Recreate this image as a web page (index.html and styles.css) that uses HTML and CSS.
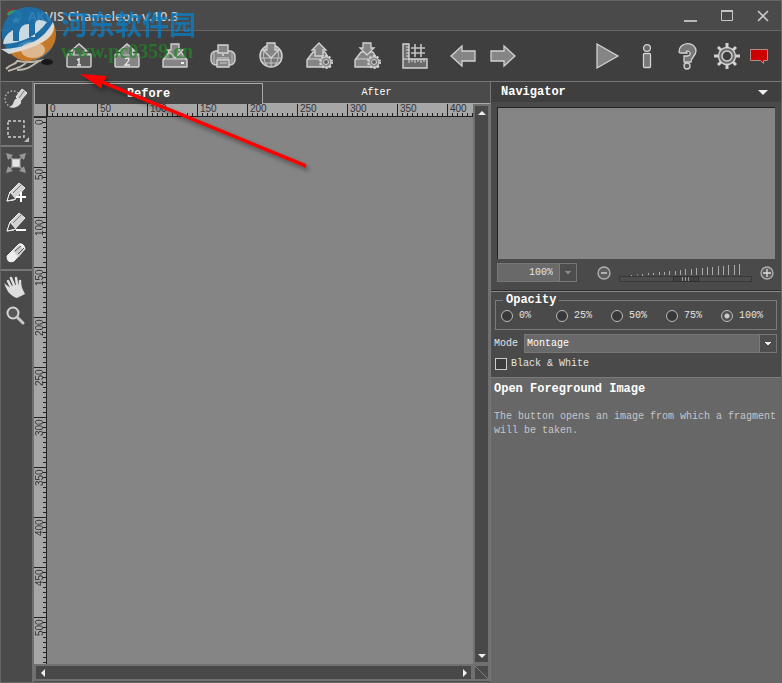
FILE: index.html
```html
<!DOCTYPE html>
<html lang="en">
<head>
<meta charset="utf-8">
<title>AKVIS Chameleon v.10.3</title>
<link rel="stylesheet" href="styles.css">
</head>
<body>
<div class="window">
  <header class="titlebar">
    <svg class="app-icon" width="18" height="18" viewBox="0 0 18 18"><path d="M1 1l4 3 3-3 2 4-5 3zM12 2l4-1-1 4z" fill="#a8283a"/><path d="M3 8c2-4 9-5 12 0 2 4-3 6-5 4" fill="none" stroke="#359a64" stroke-width="3"/><path d="M11 9l1 3 3 0-2 2 1 3-3-2-3 2 1-3-2-2h3z" fill="#d8d3a0"/></svg>
    <h1 class="title">AKVIS Chameleon v.10.3</h1>
    <div class="window-buttons">
      <button aria-label="Minimize"><svg width="14" height="14" viewBox="0 0 14 14"><path d="M0 12h13" stroke="#b8b8b8" stroke-width="2"/></svg></button>
      <button aria-label="Maximize"><svg width="14" height="14" viewBox="0 0 14 14"><path d="M1.500 2.500h11v9h-11z" fill="none" stroke="#c4c4c4"/><path d="M1 2h12" stroke="#c4c4c4" stroke-width="2"/></svg></button>
      <button aria-label="Close"><svg width="14" height="14" viewBox="0 0 14 14"><path d="M2 2l10 10M12 2L2 12" stroke="#c8c8c8" stroke-width="1.600"/></svg></button>
    </div>
  </header>

  <div class="toolbar">
    <svg class="brand" width="48" height="32" viewBox="0 0 48 32"><ellipse cx="26" cy="9" rx="14" ry="9" fill="#d8d2ca"/><path d="M1 29c5-6 9-3 12-9M3 31c9-3 16-4 20-11M12 30c9 0 12-2 22-9M13 21c10 2 16 1 26-1" fill="none" stroke="#bcb5aa" stroke-width="2"/><ellipse cx="42" cy="22" rx="6" ry="3" fill="#171717"/></svg>
    <button class="tool" aria-label="Open foreground image"><svg width="28" height="28" viewBox="0 0 28 28"><path d="M3 12h6V9H6l8-7 8 7h-3v3h6q1 0 1 1v11q0 1-1 1H3q-1 0-1-1V13q0-1 1-1z" fill="#5d5d5d" stroke="#d2d2d2" stroke-width="1.400"/><path d="M3 13h22" stroke="#d2d2d2"/><path d="M12 18l2-1v6M12 23h4" fill="none" stroke="#e5e5e5" stroke-width="1.400"/></svg></button>
    <button class="tool" aria-label="Open background image"><svg width="28" height="28" viewBox="0 0 28 28"><path d="M3 12h6V9H6l8-7 8 7h-3v3h6q1 0 1 1v11q0 1-1 1H3q-1 0-1-1V13q0-1 1-1z" fill="#858585" stroke="#d2d2d2" stroke-width="1.400"/><path d="M3 13h22" stroke="#c2c2c2"/><path d="M12 17q2-2 4 0 0 2-4 6h5" fill="none" stroke="#e5e5e5" stroke-width="1.300"/></svg></button>
    <button class="tool" aria-label="Save image"><svg width="28" height="28" viewBox="0 0 28 28"><path d="M2 18l6-8h12l6 8v7H2z" fill="#858585" stroke="#d2d2d2" stroke-width="1.400" stroke-linejoin="round"/><path d="M2 17h24" stroke="#d2d2d2"/><path d="M10 2h8v6h4l-8 8-8-8h4z" fill="#858585" stroke="#d2d2d2" stroke-width="1.300"/><path d="M20 21h3" stroke="#eee" stroke-width="2"/></svg></button>
    <button class="tool" aria-label="Print image"><svg width="28" height="28" viewBox="0 0 28 28"><rect x="2" y="9" width="24" height="14" rx="5" fill="#858585" stroke="#d2d2d2" stroke-width="1.400"/><path d="M5 10v12M23 10v12" stroke="#bcbcbc"/><path d="M9 3h10v8H9zM8 18h12v7H8z" fill="#858585" stroke="#d2d2d2" stroke-width="1.400"/><path d="M8 16h12M11 21h7" stroke="#cecece"/><circle cx="14" cy="13" r="1" fill="#ddd"/></svg></button>
    <button class="tool" aria-label="Publish image"><svg width="28" height="28" viewBox="0 0 28 28"><circle cx="14" cy="14" r="11" fill="#777" stroke="#d2d2d2" stroke-width="1.500"/><path d="M14 3v22M3 16h22M6 21h16M9 5q-6 9 2 20M19 5q6 9-2 20" fill="none" stroke="#c5c5c5"/><path d="M10 1h8v7h4l-8 8-8-8h4z" fill="#858585" stroke="#d2d2d2" stroke-width="1.300"/></svg></button>
    <button class="tool" aria-label="Load presets"><svg width="28" height="28" viewBox="0 0 28 28"><path d="M2 18l6-8h12l5 8v7H2z" fill="#858585" stroke="#d2d2d2" stroke-width="1.400" stroke-linejoin="round"/><path d="M2 17h18" stroke="#d2d2d2"/><path d="M14 1l7 7h-3v6h-8V8H7z" fill="#858585" stroke="#d2d2d2" stroke-width="1.300"/><circle cx="21" cy="20" r="6" fill="none" stroke="#d2d2d2" stroke-width="2" stroke-dasharray="2 1.800"/><circle cx="21" cy="20" r="5" fill="#858585" stroke="#d2d2d2"/><circle cx="21" cy="20" r="2.500" fill="#606060" stroke="#d2d2d2"/></svg></button>
    <button class="tool" aria-label="Save presets"><svg width="28" height="28" viewBox="0 0 28 28"><path d="M2 18l6-8h12l5 8v7H2z" fill="#858585" stroke="#d2d2d2" stroke-width="1.400" stroke-linejoin="round"/><path d="M2 17h18" stroke="#d2d2d2"/><path d="M10 1h8v5h3l-7 7-7-7h3z" fill="#858585" stroke="#d2d2d2" stroke-width="1.300"/><circle cx="21" cy="20" r="6" fill="none" stroke="#d2d2d2" stroke-width="2" stroke-dasharray="2 1.800"/><circle cx="21" cy="20" r="5" fill="#858585" stroke="#d2d2d2"/><circle cx="21" cy="20" r="2.500" fill="#606060" stroke="#d2d2d2"/></svg></button>
    <button class="tool" aria-label="Rulers and grid"><svg width="28" height="28" viewBox="0 0 28 28"><path d="M2 2h6v15h18v9H2z" fill="#6b6b6b" stroke="#d2d2d2" stroke-width="1.400"/><path d="M2 17h6M5 5h3M5 8h3M5 11h3M5 14h3M8 17v4M11 17v3M14 17v4M17 17v3M20 17v4M23 17v3" stroke="#ddd"/><path d="M14 2v13M20 2v13M10 6h14M10 11h14" stroke="#c4c4c4" stroke-width="1.600"/></svg></button>
    <button class="tool nav first" aria-label="Undo"><svg width="28" height="28" viewBox="0 0 28 28"><path d="M2 14L13 4v5h13v10H13v5z" fill="#858585" stroke="#d2d2d2" stroke-width="1.300"/></svg></button>
    <button class="tool nav" aria-label="Redo"><svg width="28" height="28" viewBox="0 0 28 28"><path d="M26 14L15 4v5H2v10h13v5z" fill="#858585" stroke="#d2d2d2" stroke-width="1.300"/></svg></button>
    <span class="spacer"></span>
    <button class="tool nav" aria-label="Run"><svg width="28" height="28" viewBox="0 0 28 28"><path d="M4 2l21 12L4 26z" fill="#858585" stroke="#d2d2d2" stroke-width="1.300"/></svg></button>
    <button class="tool nav" aria-label="About"><svg width="28" height="28" viewBox="0 0 28 28"><circle cx="14" cy="6" r="3.400" fill="#666" stroke="#d2d2d2" stroke-width="1.300"/><rect x="10.500" y="11.500" width="7" height="14" rx="1" fill="#777" stroke="#d2d2d2" stroke-width="1.300"/></svg></button>
    <button class="tool nav" aria-label="Help"><svg width="28" height="28" viewBox="0 0 28 28"><path d="M6 10C6-1 23-1 23 9c0 5-5 6-5 11h-7v-6h4c3-1 3-4 0-5-2 0-2 1-1 2H8q-2 0-2-1z" fill="#777" stroke="#d2d2d2" stroke-width="1.300"/><circle cx="14" cy="24" r="3" fill="#555" stroke="#d2d2d2" stroke-width="1.300"/></svg></button>
    <button class="tool nav" aria-label="Preferences"><svg width="28" height="28" viewBox="0 0 28 28"><g stroke="#d2d2d2" stroke-width="3"><path d="M14 1v26M1 14h26M5 5l18 18M23 5L5 23"/></g><circle cx="14" cy="14" r="8.500" fill="#6b6b6b" stroke="#d2d2d2" stroke-width="1.400"/><circle cx="14" cy="14" r="5" fill="#3e3e3e" stroke="#d2d2d2" stroke-width="1.500"/></svg></button>
    <button class="tool news" aria-label="News"><svg width="20" height="16" viewBox="0 0 20 16"><path d="M1.500 1.500h17v11h-4v3l-3-3h-10z" fill="#ce0000" stroke="#b78b8b"/></svg></button>
  </div>

  <main class="workspace">
    <nav class="tools" aria-label="Tools">
      <button aria-label="Quick selection"><svg width="24" height="24" viewBox="0 0 24 24"><circle cx="9" cy="12" r="8" fill="none" stroke="#b8b8b8" stroke-width="1.400" stroke-dasharray="1.500 2"/><path d="M12 10l6-8 5 4-7 8z" fill="#cfcfcf" stroke="#eee"/><path d="M15 11l5-7" stroke="#777"/><path d="M5 20q4-1 5-6 2-4 6-2 3 4-2 7-4 3-9 1z" fill="#ddd"/></svg></button>
      <button class="marquee" aria-label="Rectangular selection"><svg width="24" height="24" viewBox="0 0 24 24"><path d="M4 4h16v16H4z" fill="none" stroke="#d0d0d0" stroke-width="1.400" stroke-dasharray="3 2"/></svg></button>
      <hr>
      <button aria-label="Transform"><svg width="24" height="24" viewBox="0 0 24 24"><path d="M4 4l16 16M20 4L4 20" stroke="#999" stroke-width="1.500"/><path d="M2 2l7 2-5 5zM22 2l-2 7-5-5zM2 22l2-7 5 5zM22 22l-7-2 5-5z" fill="#999"/><path d="M8 8h8v8H8z" fill="#e6e6e6" stroke="#aaa"/></svg></button>
      <button aria-label="Pencil add"><svg width="24" height="24" viewBox="0 0 24 24"><path d="M3 20l3-9 9-9 6 5-11 12z" fill="#d2d2d2" stroke="#eee"/><path d="M3 20l3-9 6 7z" fill="#484848" stroke="#eee"/><path d="M9 12l8-8" stroke="#777"/><path d="M17 11v10M12 16h10" stroke="#fff" stroke-width="2"/></svg></button>
      <button aria-label="Pencil hold"><svg width="24" height="24" viewBox="0 0 24 24"><path d="M3 20l3-9 9-9 6 5-11 12z" fill="#d2d2d2" stroke="#eee"/><path d="M3 20l3-9 6 7z" fill="#484848" stroke="#eee"/><path d="M9 12l8-8" stroke="#777"/><path d="M12 19h10" stroke="#fff" stroke-width="2"/></svg></button>
      <button aria-label="Eraser"><svg width="24" height="24" viewBox="0 0 24 24"><path d="M3 15L15 3q5-1 6 5L10 20q-7 3-7-5z" fill="#eee" stroke="#f6f6f6"/><path d="M9 10l6 6 5-7-5-5z" fill="#ccc"/><path d="M11 10l6-5M14 13l6-6" stroke="#555"/></svg></button>
      <hr>
      <button aria-label="Hand"><svg width="24" height="24" viewBox="0 0 24 24"><path d="M8 19Q5 17 3 12l4 3M7 12L4 6M10 10L7 3M13 9L12 3M16 11L16 6" fill="none" stroke="#dedede" stroke-width="2.500" stroke-linecap="round"/><path d="M6 11l11-2q1 5 4 10l-8 4q-5-1-7-6z" fill="#dedede"/></svg></button>
      <button aria-label="Zoom"><svg width="24" height="24" viewBox="0 0 24 24"><circle cx="9" cy="8" r="5.500" fill="#575757" stroke="#d4d4d4" stroke-width="2"/><path d="M13 12l6 6" stroke="#c8c8c8" stroke-width="3" stroke-linecap="round"/></svg></button>
    </nav>

    <section class="document">
      <div class="tabs" role="tablist">
        <button class="tab active" role="tab" aria-selected="true">Before</button>
        <button class="tab" role="tab" aria-selected="false">After</button>
      </div>
      <div class="view">
        <div class="corner"></div>
        <div class="ruler-x"><span>0</span><span>50</span><span>100</span><span>150</span><span>200</span><span>250</span><span>300</span><span>350</span><span>400</span></div>
        <div class="scroll vertical"><button aria-label="Scroll up"><i class="arrow up"></i></button><button aria-label="Scroll down"><i class="arrow down"></i></button></div>
        <div class="ruler-y"><span>0</span><span>50</span><span>100</span><span>150</span><span>200</span><span>250</span><span>300</span><span>350</span><span>400</span><span>450</span><span>500</span></div>
        <div class="canvas"></div>
        <div class="scroll horizontal"><button aria-label="Scroll left"><i class="arrow left"></i></button><button aria-label="Scroll right"><i class="arrow right"></i></button></div>
        <div class="grip"><svg width="14" height="14" viewBox="0 0 14 14"><path d="M0 0l14 14" stroke="#808080"/></svg></div>
      </div>
    </section>

    <aside class="panel">
      <div class="panel-head"><h2>Navigator</h2><button aria-label="Navigator menu"><i class="arrow down big"></i></button></div>
      <div class="preview"></div>
      <div class="zoom-row">
        <select class="zoom-select" aria-label="Zoom"><option>100%</option></select>
        <button class="round" aria-label="Zoom out"><svg width="14" height="14" viewBox="0 0 14 14"><circle cx="7" cy="7" r="6" fill="#5d5d5d" stroke="#b0b0b0" stroke-width="1.300"/><path d="M4 7h6" stroke="#ddd" stroke-width="1.300"/></svg></button>
        <div class="slider">
          <svg width="110" height="12" viewBox="0 0 110 12" stroke="#aaa"><path d="M.5 11v1M6.500 10.500v1M11.500 10v2M17.500 9v2M22.500 9v2M28.500 8v3M33.500 8v3M38.500 7v4M44.500 7v4M49.500 6v5M54.500 5v6M60.500 5v6M65.500 4v7M71.500 4v7M76.500 3v8M81.500 3v8M87.500 2v9M92.500 2v9M97.500 1v10M103.500 1v10M108.500 0v11"/></svg>
          <input type="range" min="0" max="100" value="50" aria-label="Zoom level">
        </div>
        <button class="round" aria-label="Zoom in"><svg width="14" height="14" viewBox="0 0 14 14"><circle cx="7" cy="7" r="6" fill="#5d5d5d" stroke="#b0b0b0" stroke-width="1.300"/><path d="M3 7h8M7 3v8" stroke="#ddd" stroke-width="1.300"/></svg></button>
      </div>
      <div class="settings">
        <fieldset class="opacity">
          <legend>Opacity</legend>
          <div class="choices">
            <label><input type="radio" name="opacity">0%</label>
            <label><input type="radio" name="opacity">25%</label>
            <label><input type="radio" name="opacity">50%</label>
            <label><input type="radio" name="opacity">75%</label>
            <label><input type="radio" name="opacity" checked>100%</label>
          </div>
        </fieldset>
        <div class="mode-row"><label for="mode">Mode</label><select id="mode"><option>Montage</option></select></div>
        <label class="check"><input type="checkbox">Black &amp; White</label>
      </div>
      <div class="hint">
        <h2>Open Foreground Image</h2>
        <p>The button opens an image from which a fragment will be taken.</p>
      </div>
    </aside>
  </main>

  <div class="watermark">
    <svg width="56" height="56" viewBox="0 0 56 56"><circle cx="28" cy="28" r="27" fill="#1774b4" opacity=".86"/><path d="M8 46Q23 62 42 50 60 38 53 18 41 38 8 46z" fill="#d87918" opacity=".9"/><path d="M2 38Q31 37 46 16 34 11 34 19v12h-6V18q-9 0-10 9v8h-6V24Q3 29 2 38zM0 43q38 0 52-27 8 20-44 32z" fill="#e3e8eb" opacity=".88"/><ellipse cx="32" cy="44" rx="12" ry="8" fill="#ead9c8" opacity=".65"/></svg>
    <div class="watermark-text"><span class="site" lang="zh">河东软件园</span><span class="url">www.pc0359.cn</span></div>
  </div>
  <svg class="pointer" width="230" height="100" viewBox="0 0 230 100"><path d="M0 2l27 2-3 5 202 83q1 1 0 3t-2 0L22 12l0 5z" fill="#f00"/></svg>
</div>
</body>
</html>
```
FILE: styles.css
```css
* { box-sizing: border-box; }

body {
  margin: 0;
  background: #4a4a4a;
  color: #e4e4e4;
  font: 10px/14px "Liberation Mono", monospace;
}

button, select, input { font: inherit; color: inherit; margin: 0; }
button { padding: 0; border: 0; background: none; display: flex; align-items: center; justify-content: center; }
h1, h2, p { margin: 0; }
h2 { font-size: 12px; line-height: 14px; color: #fff; }
svg { display: block; flex: none; }

.window {
  position: relative;
  display: flex;
  flex-direction: column;
  min-height: 100vh;
  border: 1px solid #666;
  overflow: hidden;
}

.titlebar {
  display: flex;
  align-items: center;
  height: 30px;
  padding: 0 0 0 4px;
  border-bottom: 1px solid #656565;
}
.title { flex: 1; margin-left: 5px; font: 600 13px/16px "Open Sans", sans-serif; color: #ccc; }
.window-buttons { display: flex; }
.window-buttons button { width: 36px; height: 28px; }

.toolbar {
  display: flex;
  align-items: center;
  height: 51px;
  padding: 0 10px 0 4px;
  background: #3f3f3f;
  border-bottom: 1px solid #777;
}
.brand { margin-right: 2px; }
.tool { width: 48px; height: 40px; flex: none; }
.tool.nav { width: 40px; }
.tool.first { margin-left: 4px; }
.tool.news { width: 24px; }
.spacer { flex: 1; }

.workspace { flex: 1; display: grid; grid-template-columns: 33px minmax(0, 1fr) 290px; }

.tools { padding-top: 2px; border-right: 2px solid #707070; }
.tools button { width: 30px; height: 30px; }
.tools hr { height: 2px; margin: 1px 0; border: 0; background: #777; }
.marquee { position: relative; }
.marquee::after {
  content: "";
  position: absolute;
  right: 2px;
  bottom: 2px;
  border-left: 5px solid transparent;
  border-bottom: 5px solid #bbb;
}

.document { display: flex; flex-direction: column; padding: 1px 0 1px; border-right: 1px solid #777; }
.tabs { display: flex; height: 21px; }
.tab { flex: 1; border-bottom: 1px solid #aaa; color: #fff; }
.tab.active { border: 1px solid #aaa; border-bottom: 0; background: #444; font-size: 12px; font-weight: bold; }

.view {
  flex: 1;
  display: grid;
  grid-template-columns: 13px minmax(0, 1fr) 17px;
  grid-template-rows: 13px minmax(0, 1fr) 17px;
}
.corner { background: #a0a0a0; border-right: 1px solid #333; border-bottom: 1px solid #333; }
.ruler-x, .ruler-y { display: flex; overflow: hidden; color: #333; font: 10px/10px "Liberation Sans", sans-serif; }
.ruler-x {
  border-bottom: 1px solid #222;
  background: repeating-linear-gradient(to right, #222 0 1px, transparent 1px 5px) bottom / 100% 3px no-repeat #a6a6a6;
}
.ruler-x span { flex: none; width: 50px; padding-left: 2px; border-left: 1px solid #222; }
.ruler-y {
  height: 0;
  min-height: 100%;
  flex-direction: column;
  border-right: 1px solid #222;
  background: repeating-linear-gradient(to bottom, #222 0 1px, transparent 1px 5px) right / 3px 100% no-repeat #a6a6a6;
}
.ruler-y span {
  flex: none;
  height: 50px;
  width: 13px;
  padding-bottom: 1px;
  padding-right: 1px;
  border-bottom: 1px solid #222;
  text-align: right;
  writing-mode: vertical-rl;
  transform: rotate(180deg);
}
.canvas { background: #858585; }
.scroll { display: flex; justify-content: space-between; border: 2px solid #707070; background: #484848; }
.vertical { flex-direction: column; grid-row: 1 / 3; grid-column: 3; }
.horizontal { grid-column: 1 / 3; }
.scroll button { width: 13px; height: 13px; }
.grip { border: 2px solid #707070; overflow: hidden; }

.arrow { border: 4px solid transparent; }
.arrow.up { border-top: 0; border-bottom-color: #eee; }
.arrow.down { border-bottom: 0; border-top-color: #eee; }
.arrow.left { border-left: 0; border-right-color: #eee; }
.arrow.right { border-right: 0; border-left-color: #eee; }
.arrow.big { border-width: 5px 5px 0; }

.panel { display: flex; flex-direction: column; }
.panel-head {
  display: flex;
  align-items: center;
  justify-content: space-between;
  height: 20px;
  padding: 0 13px 0 10px;
  background: #3f3f3f;
}
.preview { height: 152px; margin: 5px 6px 4px; background: #858585; border-top: 1px solid #222; border-left: 1px solid #222; }

select {
  appearance: none;
  border: 1px solid #777;
  border-radius: 0;
  background-image:
    linear-gradient(#7b7b7b, #7b7b7b),
    linear-gradient(to top right, transparent 50%, var(--arrow) 51%),
    linear-gradient(to top left, transparent 50%, var(--arrow) 51%),
    linear-gradient(to left, #4d4d4d 16px, #696969 0);
  background-repeat: no-repeat;
  background-position: right 16px top, right 8px center, right 4px center, left top;
  background-size: 1px 100%, 4px 4px, 4px 4px, 100% 100%;
}
.zoom-row { display: flex; align-items: center; height: 19px; padding: 0 7px 0 6px; }
.zoom-select { --arrow: #888; width: 80px; height: 19px; padding: 0 23px 0 0; text-align: right; text-align-last: right; }
.round { width: 14px; height: 14px; }
.zoom-select + .round { margin-left: 20px; }
.slider { flex: 1; margin: 0 8px; display: flex; flex-direction: column; align-items: center; }
.slider input {
  appearance: none;
  width: 100%;
  height: 6px;
  border: 1px solid #393939;
  background: #4d4d4d;
}
.slider input::-webkit-slider-thumb {
  appearance: none;
  width: 26px;
  height: 6px;
  border: 1px solid #303030;
  background: repeating-linear-gradient(to right, #999 0 1px, transparent 1px 3px) center / 7px 4px no-repeat #414141;
}

.settings {
  display: flex;
  flex-direction: column;
  gap: 4px;
  margin-top: 9px;
  padding: 1px 4px 6px 3px;
  border-top: 1px solid #888;
  box-shadow: 0 -1px #2c2c2c;
}
.opacity { min-width: 0; margin: 0 0 0 1px; padding: 2px 13px 6px 5px; border: 1px solid #7b7b7b; }
.opacity legend { padding: 0 3px; margin-left: 2px; font-size: 12px; line-height: 14px; font-weight: bold; color: #fff; }
.choices { display: grid; grid-template-columns: repeat(4, 1fr) auto; }
.choices label, .check { display: flex; align-items: center; gap: 6px; }
.choices input {
  appearance: none;
  width: 12px;
  height: 12px;
  border: 1px solid #bbb;
  border-radius: 50%;
  background: #383838;
}
.choices input:checked { background: radial-gradient(circle, #ccc 0 2px, #505050 3px); }
.mode-row { display: flex; align-items: center; gap: 6px; }
#mode { --arrow: #eee; flex: 1; height: 19px; padding: 0 2px; color: #fff; }
.check { gap: 4px; margin-left: 1px; }
.check input { appearance: none; width: 12px; height: 12px; border: 1px solid #ccc; background: #3c3c3c; }

.hint { flex: 1; padding: 4px 3px; background: #676767; border-top: 1px solid #7a7a7a; }
.hint p { margin-top: 14px; color: #c6c6c6; }

.watermark { position: absolute; left: 0; top: 5px; display: flex; pointer-events: none; }
.watermark-text { display: flex; flex-direction: column; padding: 2px 0 0 4px; opacity: 0.75; }
.site { font: bold 27px/32px "Noto Sans CJK SC", sans-serif; color: #087fc8; }
.url { font: bold 20px/22px "Liberation Serif", serif; color: #238427; }
.pointer { position: absolute; left: 79px; top: 71px; pointer-events: none; filter: drop-shadow(2px 3px 2px #0006); }
```
